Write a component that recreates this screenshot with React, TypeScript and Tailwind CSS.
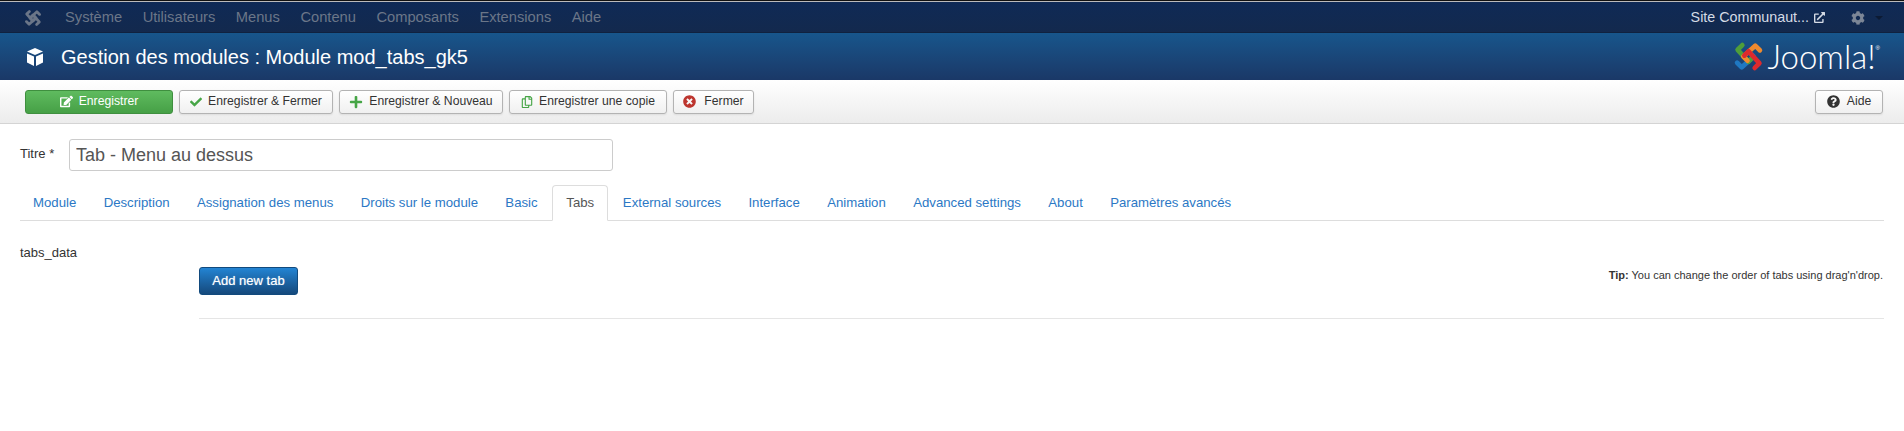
import React from 'react';
import { FaCheck, FaPlus, FaTimesCircle, FaQuestionCircle, FaEdit, FaExternalLinkAlt, FaCog, FaRegCopy } from 'react-icons/fa';

const menus = ['Système', 'Utilisateurs', 'Menus', 'Contenu', 'Composants', 'Extensions', 'Aide'];

const tabs = [
  'Module',
  'Description',
  'Assignation des menus',
  'Droits sur le module',
  'Basic',
  'Tabs',
  'External sources',
  'Interface',
  'Animation',
  'Advanced settings',
  'About',
  'Paramètres avancés',
];

const JoomlaMark = ({ mono = false, className }: { mono?: boolean; className: string }) => {
  const colors = mono
    ? ['#6b7688', '#6b7688', '#6b7688', '#6b7688']
    : ['#1f78c2', '#4f9e3a', '#ef8a2e', '#dc2a2e'];
  return (
    <svg viewBox="0 0 30 30" className={className} fill="none" strokeWidth="4.6" strokeLinecap="round" strokeLinejoin="round">
      <path d="M4 21 L8.5 25.5 L20 15 L16 11" stroke={colors[0]} />
      <path d="M9 4 L4.5 8.5 L15 20 L19 16" stroke={colors[1]} />
      <path d="M26 9 L21.5 4.5 L10 15 L14 19" stroke={colors[2]} />
      <path d="M21 26 L25.5 21.5 L15 10 L11 14" stroke={colors[3]} />
    </svg>
  );
};

const CubeIcon = () => (
  <svg viewBox="0 0 20 20" className="h-[20px] w-[20px]" fill="#fff">
    <path d="M10 1 L18 4.5 L10 8 L2 4.5 Z" />
    <path d="M2 6.5 L9 9.5 V19 L2 15.5 Z" />
    <path d="M18 6.5 L11 9.5 V19 L18 15.5 Z" />
  </svg>
);

const ToolbarButton = ({ icon, label, className }: { icon: React.ReactNode; label: string; className: string }) => (
  <button className={`flex h-[24px] items-center justify-center rounded-[3px] border border-[#b3b3b3] bg-linear-to-b from-white to-[#f0f0f0] text-[12.2px] text-[#333] shadow-[0_1px_2px_rgba(0,0,0,0.08)] ${className}`}>
    {icon}
    {label}
  </button>
);

export default function App() {
  return (
    <div className="min-h-[431px] w-full bg-white font-['Liberation_Sans',sans-serif] text-[#333]">
      <div className="h-[1px] bg-[#111]" />
      <div className="h-[1px] bg-[#bbb]" />
      <div className="flex h-[31px] items-center bg-linear-to-b from-[#0f2a56] to-[#13294d] pl-[24px] pr-[21px] shadow-[inset_0_-1px_0_#10223f]">
        <JoomlaMark mono className="h-[18px] w-[18px]" />
        <nav className="ml-[23px] flex gap-[20.5px] text-[14.7px] text-[#6b7688]">
          {menus.map((menu) => (
            <a key={menu}>{menu}</a>
          ))}
        </nav>
        <div className="ml-auto flex items-center text-[14.3px] text-[#d5dbe5]">
          Site Communaut...
          <FaExternalLinkAlt className="ml-[5px] h-[11px] w-[11px]" />
        </div>
        <FaCog className="ml-[26px] h-[14px] w-[14px] text-[#7c8696]" />
        <span className="ml-[10px] h-0 w-0 border-x-[4px] border-t-[4px] border-x-transparent border-t-[#0c1a33]" />
      </div>
      <div className="flex h-[47px] items-center bg-linear-to-b from-[#17568c] to-[#1a3867] pl-[25px] pr-[24px]">
        <CubeIcon />
        <h1 className="ml-[16px] mt-[1px] text-[20px] leading-none text-white">Gestion des modules : Module mod_tabs_gk5</h1>
        <div className="ml-auto flex items-center">
          <JoomlaMark className="h-[31px] w-[31px]" />
          <span className="ml-[4px] font-['Lato',sans-serif] text-[33px] font-light leading-none text-white">Joomla!</span>
          <span className="mb-[18px] text-[6px] leading-none text-white">®</span>
        </div>
      </div>
      <div className="flex h-[44px] items-center justify-between border-b border-[#d4d4d4] bg-linear-to-b from-white to-[#ececec] px-[25px] pr-[21px]">
        <div className="flex gap-[6px]">
          <button className="flex h-[24px] w-[148px] items-center justify-center rounded-[3px] border border-[#3f8f3f] bg-linear-to-b from-[#5fbb5f] to-[#46a046] text-[12.2px] text-white">
            <FaEdit className="mr-[6px] h-[13px] w-[13px]" />
            Enregistrer
          </button>
          <ToolbarButton className="w-[154px]" icon={<FaCheck className="mr-[6px] h-[12px] w-[12px] text-[#46a546]" />} label="Enregistrer & Fermer" />
          <ToolbarButton className="w-[164px]" icon={<FaPlus className="mr-[6px] h-[14px] w-[14px] text-[#46a546]" />} label="Enregistrer & Nouveau" />
          <ToolbarButton className="w-[158px]" icon={<FaRegCopy className="mr-[6px] h-[12px] w-[12px] text-[#46a546]" />} label="Enregistrer une copie" />
          <ToolbarButton className="w-[81px]" icon={<FaTimesCircle className="mr-[8px] h-[13px] w-[13px] text-[#bd362f]" />} label="Fermer" />
        </div>
        <ToolbarButton className="w-[68px]" icon={<FaQuestionCircle className="mr-[7px] h-[13px] w-[13px] text-[#333]" />} label="Aide" />
      </div>
      <div className="px-[20px]">
        <div className="mt-[15px] flex items-center">
          <label className="mb-[2px] w-[49px] text-[13px]">Titre *</label>
          <input
            readOnly
            value="Tab - Menu au dessus"
            className="h-[32px] w-[544px] rounded-[3px] border border-[#ccc] px-[6px] text-[18px] text-[#555] outline-none"
          />
        </div>
        <div className="mt-[14px] flex h-[36px] border-b border-[#ddd] text-[13.2px] text-[#2b78c5]">
          {tabs.map((tab, index) =>
            tab === 'Tabs' ? (
              <a key={tab} className="mx-[1px] flex h-[36px] items-center rounded-t-[4px] border border-[#ddd] border-b-white px-[13px] text-[#555]">
                {tab}
              </a>
            ) : (
              <a key={tab} className={index === 0 ? 'flex items-center pl-[13px] pr-[13.7px]' : 'flex items-center px-[13.7px]'}>
                {tab}
              </a>
            ),
          )}
        </div>
        <div className="mt-[22px] flex">
          <div className="w-[179px] text-[13px]">tabs_data</div>
          <div className="flex-1">
            <div className="mt-[24px] flex items-start justify-between">
              <button className="h-[28px] w-[99px] rounded-[3px] border border-[#124a7d] bg-linear-to-b from-[#2384d3] to-[#15497c] text-[13px] text-white [text-shadow:0_0_1px_rgba(255,255,255,0.6)]">
                Add new tab
              </button>
              <p className="mr-[1px] text-[11px]">
                <b>Tip:</b> You can change the order of tabs using drag'n'drop.
              </p>
            </div>
            <div className="mt-[23px] border-t border-[#e5e5e5]" />
          </div>
        </div>
      </div>
    </div>
  );
}
